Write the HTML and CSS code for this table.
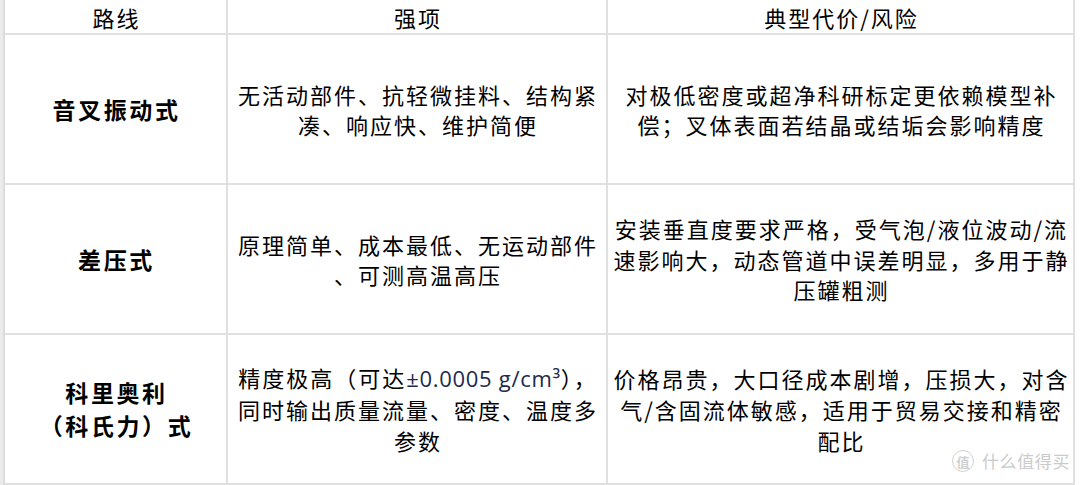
FILE: index.html
```html
<!DOCTYPE html>
<html lang="zh-CN">
<head>
<meta charset="utf-8">
<title>密度计路线对比</title>
<link rel="stylesheet" href="styles.css">
</head>
<body>
<div class="sheet">
  <div class="grid">
    <div class="cell head"><div class="txt">路线</div></div>
    <div class="cell head"><div class="txt">强项</div></div>
    <div class="cell head"><div class="txt">典型代价/风险</div></div>

    <div class="cell name"><div class="txt">音叉振动式</div></div>
    <div class="cell"><div class="txt">无活动部件、抗轻微挂料、结构紧<br>凑、响应快、维护简便</div></div>
    <div class="cell"><div class="txt">对极低密度或超净科研标定更依赖模型补<br>偿；叉体表面若结晶或结垢会影响精度</div></div>

    <div class="cell name"><div class="txt">差压式</div></div>
    <div class="cell"><div class="txt">原理简单、成本最低、无运动部件<br>、可测高温高压</div></div>
    <div class="cell"><div class="txt">安装垂直度要求严格，受气泡/液位波动/流<br>速影响大，动态管道中误差明显，多用于静<br>压罐粗测</div></div>

    <div class="cell name"><div class="txt tall">科里奥利<br>（科氏力）式</div></div>
    <div class="cell"><div class="txt wide">精度极高（可达<span class="latin">±0.0005 g/cm³</span>），<br>同时输出质量流量、密度、温度多<br>参数</div></div>
    <div class="cell"><div class="txt wide">价格昂贵，大口径成本剧增，压损大，对含<br>气/含固流体敏感，适用于贸易交接和精密<br>配比</div></div>
  </div>
  <div class="watermark">
    <span class="wm-icon">值</span>
    <span class="wm-text">什么值得买</span>
  </div>
</div>
</body>
</html>
```

FILE: styles.css
```css
html, body {
  margin: 0;
  padding: 0;
  background: #ffffff;
}

body {
  font-family: "Noto Sans CJK SC", "Noto Sans", sans-serif;
  color: #000000;
}

.sheet {
  position: relative;
  width: 1080px;
  height: 485px;
  overflow: hidden;
  box-sizing: border-box;
  border-left: 3px solid #ebebeb;
}

.grid {
  display: grid;
  grid-template-columns: 223px 380px 467px;
  grid-template-rows: 35px 150px 150px 150px;
  width: max-content;
  border-left: 2px solid #dcdcdc;
}

.cell {
  box-sizing: border-box;
  border-right: 2px solid #e0e0e0;
  border-bottom: 2px solid #e0e0e0;
  display: flex;
  align-items: center;
  justify-content: center;
  overflow: hidden;
}

.txt {
  font-size: 22px;
  letter-spacing: 2px;
  line-height: 30.5px;
  text-align: center;
  white-space: nowrap;
  margin-right: -2px;
}

.txt.wide {
  line-height: 31px;
}

.head .txt {
  line-height: 33px;
  padding-top: 1px;
}

.name .txt {
  font-weight: bold;
  font-size: 23px;
  letter-spacing: 2.6px;
}

.name .txt.tall {
  line-height: 33px;
}

.latin {
  font-family: "Open Sans", "Noto Sans", sans-serif;
  font-size: 22px;
  letter-spacing: 0.7px;
  color: #1b2b4b;
}

.watermark {
  position: absolute;
  left: 949px;
  top: 450px;
  display: flex;
  align-items: center;
  gap: 8px;
  color: #cbcbcb;
}

.wm-icon {
  box-sizing: border-box;
  width: 22px;
  height: 22px;
  border: 1.5px solid #d2d2d2;
  border-radius: 50%;
  display: flex;
  align-items: center;
  justify-content: center;
  font-size: 13px;
  font-weight: bold;
  color: #cfcfcf;
}

.wm-text {
  font-size: 17px;
  letter-spacing: 0.6px;
  line-height: 20px;
}
```
